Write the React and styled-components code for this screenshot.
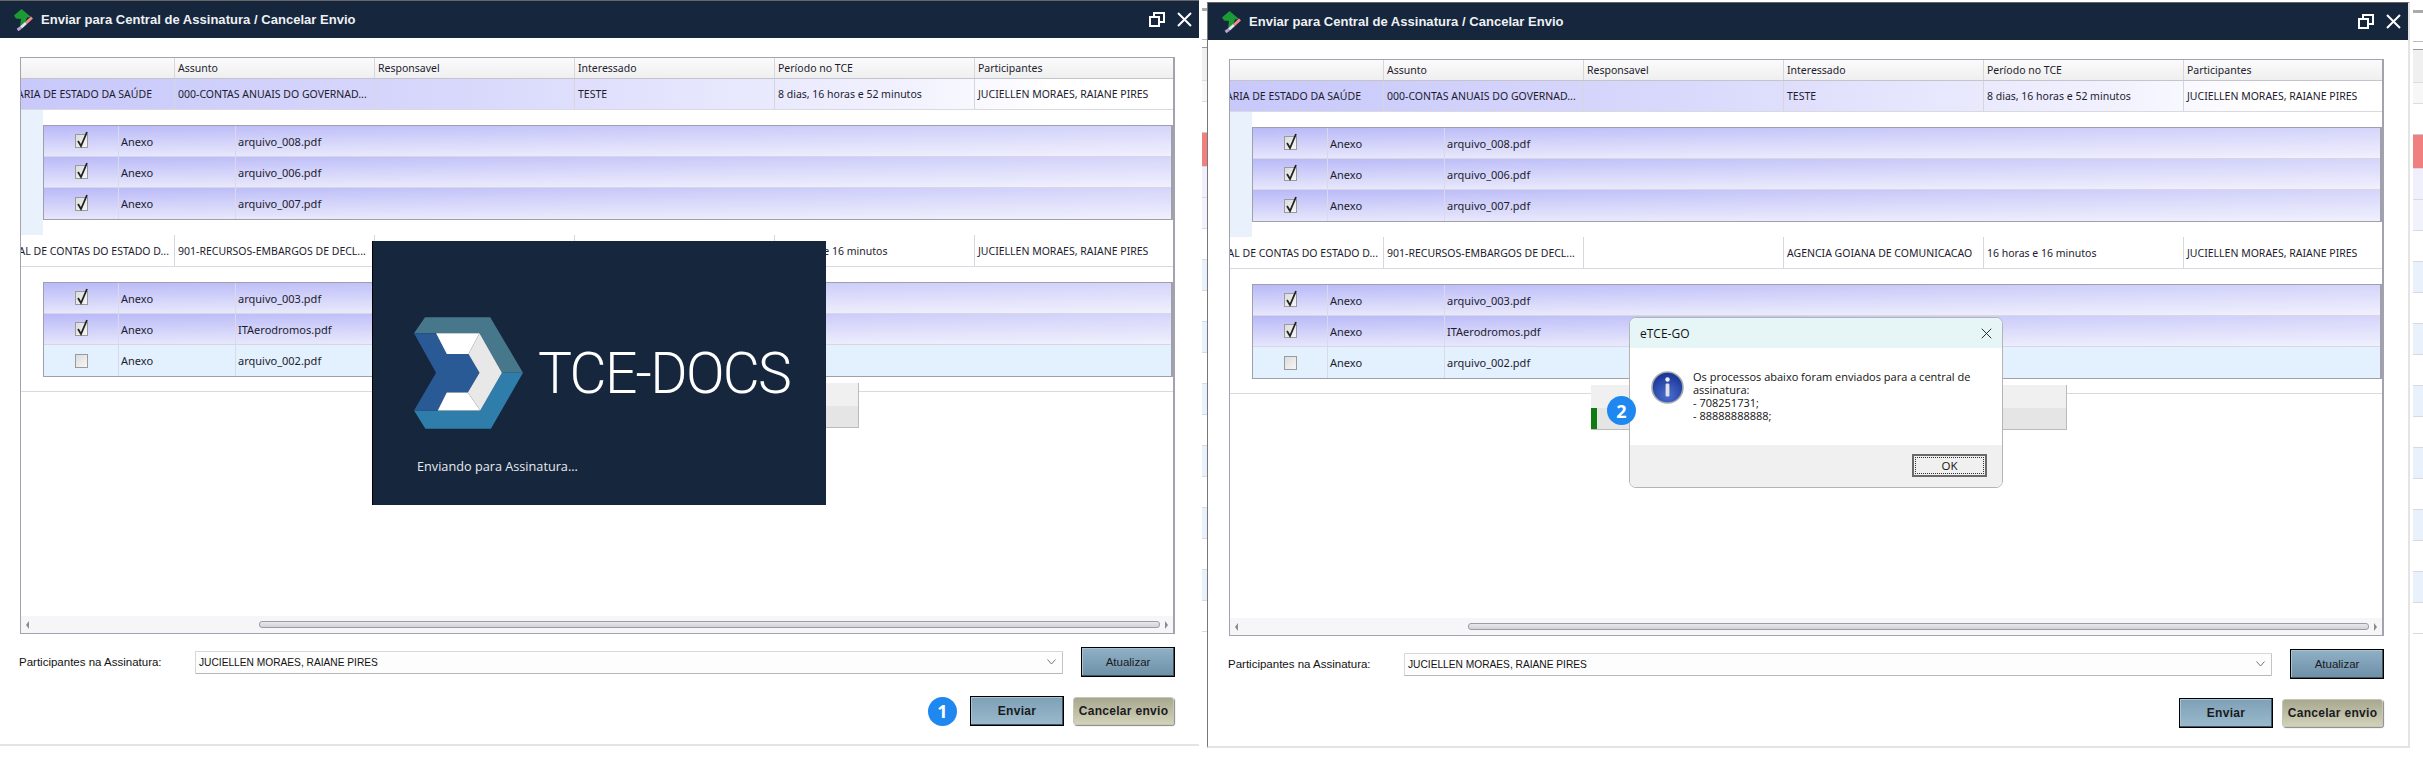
import React from "react";
import styled, { createGlobalStyle } from "styled-components";

const GlobalStyle = createGlobalStyle`
  html, body { margin: 0; padding: 0; background: #fff; }
  * { box-sizing: border-box; }
  body { font-family: "Noto Sans", "Liberation Sans", sans-serif; color: #1c1c2e; }
`;

const Page = styled.div`
  display: flex;
  align-items: flex-start;
  width: 2423px;
  height: 759px;
  overflow: hidden;
  background: #fff;
`;

// janela do app que fica por tras, aparece so nas beiradas
const BackStrip = styled.div`
  flex: none;
  width: ${(p) => p.$width}px;
  margin-top: ${(p) => p.$top}px;
  padding-left: 3px;
  display: flex;
  flex-direction: column;
`;

const BackRow = styled.div`
  height: ${(p) => p.$h}px;
  background: ${(p) => p.$bg};
  border-bottom: 1px solid ${(p) => p.$line || "#d9d9e2"};
`;

const Window = styled.div`
  flex: none;
  position: relative;
  width: ${(p) => p.$width}px;
  height: 746px;
  margin-top: ${(p) => p.$top}px;
  display: flex;
  flex-direction: column;
  border-top: 1px solid #666;
  border-bottom: 2px solid #e4e4e4;
  border-right: ${(p) => (p.$right ? "2px solid #e4e4e4" : "none")};
  border-left: ${(p) => (p.$right ? "1px solid #777" : "none")};
`;

const TitleBar = styled.div`
  flex: none;
  height: 37px;
  padding: 0 7px 0 14px;
  display: flex;
  align-items: center;
  background: #16263d;
`;

const TitleText = styled.span`
  margin-left: 7px;
  font-family: "Liberation Sans", sans-serif;
  font-size: 13px;
  font-weight: 700;
  letter-spacing: 0.03px;
  color: #eef1f4;
  flex: 1;
`;

const TitleButtons = styled.div`
  display: flex;
  align-items: center;
  gap: 12px;
`;

const Body = styled.div`
  flex: 1;
  display: flex;
  flex-direction: column;
  padding: 19px 24px 0 ${(p) => (p.$right ? 21 : 20)}px;
`;

const Grid = styled.div`
  flex: none;
  height: 577px;
  display: flex;
  flex-direction: column;
  border: 1px solid #a3a3af;
  border-right-width: 2px;
  overflow: hidden;
`;

const ScrollArea = styled.div`
  flex: 1;
  overflow: hidden;
`;

const Row = styled.div`
  display: grid;
  grid-template-columns: 154px repeat(5, 200px);
  height: ${(p) => p.$h}px;
  font-size: 10.5px;
`;

const HeaderRow = styled(Row)`
  background: linear-gradient(180deg, #fbfbfb, #efefef);
  border-bottom: 1px solid #c4c4cc;
`;

const DataRow = styled(Row)`
  border-bottom: 1px solid #d9d9e2;
  background: ${(p) =>
    p.$selected ? "linear-gradient(90deg, #c8c8fb 0%, #d9d9fc 40%, #f0f0fe 75%, #ffffff 90%)" : "#fff"};
`;

const Cell = styled.div`
  display: flex;
  align-items: center;
  justify-content: ${(p) => (p.$end ? "flex-end" : "flex-start")};
  padding: ${(p) => (p.$end ? `0 ${p.$end}px 0 0` : "0 0 0 3px")};
  border-right: 1px solid #d6d6de;
  white-space: nowrap;
  overflow: hidden;
  & > span { flex: none; }
`;

const DetailWrap = styled.div`
  padding: 15px 0 14px 22px;
  background: ${(p) => (p.$shaded ? "linear-gradient(90deg, #e8f1fc 22px, #fff 22px)" : "#fff")};
  border-bottom: 1px solid ${(p) => (p.$last ? "#d9d9e2" : "transparent")};
`;

const DetailTable = styled.div`
  border: 1px solid #a0a0ac;
  border-right-width: 2px;
  border-bottom-width: 1px;
`;

const DetailRow = styled.div`
  display: grid;
  grid-template-columns: 75px 117px 1fr;
  height: 31px;
  font-size: 11px;
  border-bottom: 1px solid #d6d6e6;
  background: ${(p) =>
    p.$checked
      ? "linear-gradient(90deg, rgba(255,255,255,0), rgba(255,255,255,.4)), linear-gradient(180deg, #b9b9f8, #e6e6fc)"
      : "#e3f0fe"};
  &:last-child { border-bottom: 0; }
`;

const DetailCell = styled.div`
  display: flex;
  align-items: center;
  justify-content: ${(p) => (p.$center ? "center" : "flex-start")};
  padding-left: ${(p) => (p.$center ? 0 : 2)}px;
  border-right: ${(p) => (p.$plain ? "none" : "1px solid #d9d9ee")};
`;

const CheckBox = styled.span`
  position: relative;
  display: block;
  width: 13px;
  height: 14px;
  border: 1px solid #9a9a9a;
  background: linear-gradient(135deg, #dcdcdc, #f6f6f6);
  & svg { position: absolute; left: 0; top: -4px; overflow: visible; }
`;

const Scrollbar = styled.div`
  flex: none;
  height: 17px;
  display: flex;
  align-items: center;
  padding: 0 5px;
  background: #f6f6f8;
`;

const ScrollThumb = styled.div`
  width: 901px;
  height: 7px;
  margin: 0 5px 0 auto;
  border: 1px solid #9c9ca6;
  border-radius: 3px;
  background: linear-gradient(180deg, #e8e8ec, #d2d2d8);
`;

const ScrollArrow = styled.span`
  width: 0;
  height: 0;
  border-top: 4px solid transparent;
  border-bottom: 4px solid transparent;
  ${(p) => (p.$left ? "border-right: 3px solid #8a8a8a;" : "border-left: 3px solid #8a8a8a;")}
`;

const ParticipantsRow = styled.div`
  flex: none;
  display: flex;
  align-items: center;
  margin-top: 13px;
  height: 30px;
  font-family: "Liberation Sans", sans-serif;
  font-size: 11.5px;
  color: #111;
`;

const FieldLabel = styled.label`
  width: 177px;
  margin-left: -1px;
`;

const Combo = styled.div`
  flex: none;
  width: 868px;
  height: 23px;
  padding: 0 6px 0 3px;
  display: flex;
  align-items: center;
  justify-content: space-between;
  font-size: 10.2px;
  background: #fdfdfd;
  border: 1px solid #d8d8d8;
  border-bottom: 1px solid #b8b8b8;
  border-right: 1px solid #c4c4c4;
  border-radius: 1px;
`;

const ActionRow = styled.div`
  flex: none;
  display: flex;
  align-items: center;
  justify-content: flex-end;
  margin-top: 19px;
  padding-right: 1px;
`;

const Button = styled.button`
  flex: none;
  width: ${(p) => p.$w}px;
  height: ${(p) => p.$hgt || 30}px;
  padding: 0;
  margin-left: ${(p) => p.$ml || 0}px;
  font-family: "Liberation Sans", sans-serif;
  font-size: ${(p) => (p.$bold ? 12 : 11.5)}px;
  font-weight: ${(p) => (p.$bold ? 700 : 400)};
  letter-spacing: ${(p) => (p.$bold ? ".3px" : 0)};
  color: #1a1a22;
  border-radius: ${(p) => (p.$khaki ? 3 : 0)}px;
  border: ${(p) => (p.$khaki ? "1px solid #c6c6b6" : "1px solid #000")};
  background: ${(p) =>
    p.$khaki
      ? "linear-gradient(180deg, #a8a890, #d2d2b8)"
      : p.$flip
        ? "linear-gradient(180deg, #8fb0c5, #6e90a7)"
        : "linear-gradient(180deg, #7ea0b6, #9ab9cc)"};
  box-shadow: ${(p) =>
    p.$khaki ? "1px 1px 1px #888" : "inset -1px -1px 0 #3e5566, inset 1px 1px 0 #a8c3d4"};
`;

const ProgressStrip = styled.div`
  position: absolute;
  left: ${(p) => p.$left}px;
  top: 382px;
  width: 476px;
  height: 45px;
  display: flex;
  flex-direction: column;
  border-right: 1px solid #bbb;
  border-bottom: 1px solid #bbb;
`;

const ProgressTop = styled.div`
  height: 23px;
  background: #f0f0f0;
`;

const ProgressBottom = styled.div`
  flex: 1;
  background: #e5e5e5;
`;

const ProgressFill = styled.div`
  width: 6px;
  height: 100%;
  background: #107c10;
`;

const Splash = styled.div`
  position: absolute;
  left: 372px;
  top: 240px;
  width: 454px;
  height: 264px;
  background: #16263d;
  border-left: 1px solid #000;
`;

const SplashBrand = styled.div`
  display: flex;
  align-items: center;
  padding: 76px 0 0 41px;
  gap: 15px;
`;

const SplashName = styled.span`
  font-family: Roboto, sans-serif;
  font-size: 57px;
  font-weight: 300;
  line-height: 1;
  color: #fff;
  letter-spacing: -1.7px;
`;

const SplashStatus = styled.p`
  margin: 28px 0 0 44px;
  font-family: "Open Sans", sans-serif;
  font-size: 12.7px;
  color: #e8ebee;
`;

const Badge = styled.span`
  flex: none;
  display: flex;
  align-items: center;
  justify-content: center;
  width: 29px;
  height: 29px;
  margin-right: ${(p) => p.$mr || 0}px;
  border-radius: 50%;
  background: #1e88f0;
  color: #fff;
  font-family: "Open Sans", sans-serif;
  font-size: 18px;
  font-weight: 700;
`;

const FloatingBadge = styled(Badge)`
  position: absolute;
  left: 399px;
  top: 393px;
  z-index: 3;
`;

const Dialog = styled.div`
  position: absolute;
  left: 421px;
  top: 314px;
  width: 374px;
  height: 171px;
  z-index: 2;
  display: flex;
  flex-direction: column;
  border: 1px solid #b4b4b4;
  border-radius: 7px;
  overflow: hidden;
  background: #fff;
  font-family: "Open Sans", sans-serif;
  color: #111;
`;

const DialogTitle = styled.div`
  flex: none;
  height: 30px;
  padding: 0 10px 0 10px;
  display: flex;
  align-items: center;
  justify-content: space-between;
  background: #e6f5f5;
  font-size: 12px;
`;

const DialogBody = styled.div`
  flex: 1;
  display: flex;
  gap: 9px;
  padding: 23px 10px 0 21px;
`;

const DialogText = styled.p`
  margin: -1px 0 0;
  font-size: 11px;
  line-height: 13px;
  white-space: pre-line;
`;

const DialogFooter = styled.div`
  flex: none;
  height: 42px;
  padding: 9px 15px 0 0;
  display: flex;
  justify-content: flex-end;
  background: #f0f0f0;
`;

const OkButton = styled.button`
  width: 75px;
  height: 23px;
  padding: 0;
  font-family: "Open Sans", sans-serif;
  font-size: 11.5px;
  color: #111;
  background: #f0f0f0;
  border: 2px solid #6a6a6a;
  outline: 1px dotted #333;
  outline-offset: -4px;
`;

const GREEN_ROWS = [
  { h: 10, bg: "#fff", line: "#fff" },
  { h: 3, bg: "#aaa", line: "#aaa" },
  { h: 29, bg: "#fff", line: "#bbb" },
  { h: 8, bg: "#fff", line: "#999" },
  { h: 33, bg: "#f0f0f0", line: "#ddd" },
  { h: 21, bg: "#f7f7f7", line: "#ddd" },
  { h: 31, bg: "#fff", line: "#ccc" },
  { h: 34, bg: "#f08080", line: "#ddd" },
  { h: 31, bg: "#f0f0fc" },
  { h: 31, bg: "#f2f2fc" },
  { h: 31, bg: "#fff" },
  { h: 31, bg: "#e8f1fc" },
  { h: 31, bg: "#fff" },
  { h: 31, bg: "#e8f1fc" },
  { h: 31, bg: "#fff" },
  { h: 31, bg: "#e8f1fc" },
  { h: 31, bg: "#fff" },
  { h: 31, bg: "#e8f1fc" },
  { h: 31, bg: "#fff" },
  { h: 31, bg: "#e8f1fc" },
  { h: 31, bg: "#fff" },
  { h: 31, bg: "#e8f1fc" },
  { h: 31, bg: "#fff" },
];

const HEADERS = ["", "Assunto", "Responsavel", "Interessado", "Período no TCE", "Participantes"];

const PROCESSES = [
  {
    orgao: "SECRETARIA DE ESTADO DA SAÚDE",
    end: 22,
    assunto: "000-CONTAS ANUAIS DO GOVERNAD...",
    interessado: "TESTE",
    periodo: "8 dias, 16 horas e 52 minutos",
    selected: true,
    files: [
      { name: "arquivo_008.pdf", checked: true },
      { name: "arquivo_006.pdf", checked: true },
      { name: "arquivo_007.pdf", checked: true },
    ],
  },
  {
    orgao: "TRIBUNAL DE CONTAS DO ESTADO D...",
    end: 5,
    assunto: "901-RECURSOS-EMBARGOS DE DECL...",
    interessado: "AGENCIA GOIANA DE COMUNICACAO",
    periodo: "16 horas e 16 minutos",
    selected: false,
    files: [
      { name: "arquivo_003.pdf", checked: true },
      { name: "ITAerodromos.pdf", checked: true },
      { name: "arquivo_002.pdf", checked: false },
    ],
  },
];

const AppIcon = () => (
  <svg width="20" height="22" viewBox="0 0 20 22">
    <polygon points="0,6.5 7.5,0 17,8 13,8.5 11,14 6,18 7,10 2,9.5" fill="#1c9a35" />
    <line x1="18" y1="8.5" x2="12" y2="14" stroke="#f28b8b" strokeWidth="3" />
    <line x1="12" y1="14" x2="7" y2="18.5" stroke="#e9e4ec" strokeWidth="3" />
    <line x1="7" y1="18.5" x2="3.5" y2="21" stroke="#b9a3d6" strokeWidth="3" />
  </svg>
);

const RestoreIcon = () => (
  <svg width="16" height="15" viewBox="0 0 16 15" fill="none" stroke="#fff" strokeWidth="2">
    <rect x="1" y="5" width="9" height="9" />
    <path d="M5 5V1h10v9h-5" />
  </svg>
);

const CloseIcon = ({ size = 15, color = "#fff", width = 2 }) => (
  <svg width={size} height={size} viewBox="0 0 15 15" stroke={color} strokeWidth={width}>
    <path d="M1 1l13 13M14 1L1 14" />
  </svg>
);

const TickIcon = () => (
  <svg width="13" height="16" viewBox="0 0 13 16" fill="none" stroke="#222" strokeWidth="1.8">
    <path d="M2 10l3 5L11 1" />
  </svg>
);

const ChevronIcon = () => (
  <svg width="9" height="6" viewBox="0 0 9 6" fill="none" stroke="#777">
    <path d="M.5 .5l4 4.5 4-4.5" />
  </svg>
);

const TceLogo = () => (
  <svg width="109" height="112" viewBox="162 262 326 334">
    <polygon points="162,310 195,262 390,262 488,428 425,428 358,310" fill="#47778a" />
    <polygon points="488,428 392,596 196,596 162,541 360,541 425,428" fill="#2f7dab" />
    <polygon points="162,310 228,310 260,372 325,372 358,428 323,487 260,487 233,541 162,541 228,428" fill="#2a5a96" />
    <polygon points="228,310 358,310 325,372 260,372" fill="#fff" />
    <polygon points="260,487 323,487 360,541 233,541" fill="#fff" />
    <polygon points="358,310 425,428 360,541 323,487 358,428 325,372" fill="#e8e8e8" />
  </svg>
);

const InfoIcon = () => (
  <svg width="33" height="33" viewBox="0 0 33 33" style={{ flex: "none" }}>
    <defs>
      <radialGradient id="infoBlue" cx="50%" cy="75%" r="70%">
        <stop offset="0" stopColor="#4a6fd0" />
        <stop offset="1" stopColor="#1a3596" />
      </radialGradient>
    </defs>
    <circle cx="16.5" cy="16.5" r="15.5" fill="url(#infoBlue)" stroke="#a8a8ae" strokeWidth="1.6" />
    <circle cx="16.5" cy="8.5" r="2.2" fill="#f2f2f2" />
    <rect x="14.6" y="12.5" width="3.8" height="13" rx="1.2" fill="#e2e2e6" />
  </svg>
);

const Back = ({ width, top }) => (
  <BackStrip $width={width} $top={top}>
    {GREEN_ROWS.map((r, i) => (
      <BackRow key={i} $h={r.h} $bg={r.bg} $line={r.line} />
    ))}
  </BackStrip>
);

const ProcessBlock = ({ proc, index, participantes }) => (
  <>
    <DataRow $h={proc.selected ? 31 : 32} $selected={proc.selected}>
      <Cell $end={proc.end}><span>{proc.orgao}</span></Cell>
      <Cell>{proc.assunto}</Cell>
      <Cell />
      <Cell>{proc.interessado}</Cell>
      <Cell>{proc.periodo}</Cell>
      <Cell>{participantes}</Cell>
    </DataRow>
    <DetailWrap $shaded={index === 0} $last={index === 1}>
      <DetailTable>
        {proc.files.map((f) => (
          <DetailRow key={f.name} $checked={f.checked}>
            <DetailCell $center>
              <CheckBox>{f.checked && <TickIcon />}</CheckBox>
            </DetailCell>
            <DetailCell>Anexo</DetailCell>
            <DetailCell $plain>{f.name}</DetailCell>
          </DetailRow>
        ))}
      </DetailTable>
    </DetailWrap>
  </>
);

const SendWindow = ({ width, top, right, children, badge }) => {
  const participantes = "JUCIELLEN MORAES, RAIANE PIRES";
  return (
    <Window $width={width} $top={top} $right={right}>
      <TitleBar>
        <AppIcon />
        <TitleText>Enviar para Central de Assinatura / Cancelar Envio</TitleText>
        <TitleButtons>
          <RestoreIcon />
          <CloseIcon />
        </TitleButtons>
      </TitleBar>
      <Body $right={right}>
        <Grid>
          <HeaderRow $h={21}>
            {HEADERS.map((h) => (
              <Cell key={h}>{h}</Cell>
            ))}
          </HeaderRow>
          <ScrollArea>
            {PROCESSES.map((p, i) => (
              <ProcessBlock key={p.orgao} proc={p} index={i} participantes={participantes} />
            ))}
          </ScrollArea>
          <Scrollbar>
            <ScrollArrow $left />
            <ScrollThumb />
            <ScrollArrow />
          </Scrollbar>
        </Grid>
        <ParticipantsRow>
          <FieldLabel>Participantes na Assinatura:</FieldLabel>
          <Combo>
            {participantes}
            <ChevronIcon />
          </Combo>
          <Button $w={94} $ml={18} $flip>Atualizar</Button>
        </ParticipantsRow>
        <ActionRow>
          {badge && <Badge $mr={13}>1</Badge>}
          <Button $w={94} $bold>Enviar</Button>
          <Button $w={101} $hgt={28} $ml={9} $bold $khaki>Cancelar envio</Button>
        </ActionRow>
      </Body>
      {children}
    </Window>
  );
};

export default function App() {
  return (
    <Page>
      <GlobalStyle />
      <SendWindow width={1199} top={0} badge>
        <ProgressStrip $left={383}>
          <ProgressTop />
          <ProgressBottom />
        </ProgressStrip>
        <Splash>
          <SplashBrand>
            <TceLogo />
            <SplashName>TCE-DOCS</SplashName>
          </SplashBrand>
          <SplashStatus>Enviando para Assinatura...</SplashStatus>
        </Splash>
      </SendWindow>
      <Back width={8} top={-2} />
      <SendWindow width={1203} top={2} right>
        <ProgressStrip $left={383}>
          <ProgressTop />
          <ProgressBottom><ProgressFill /></ProgressBottom>
        </ProgressStrip>
        <FloatingBadge>2</FloatingBadge>
        <Dialog>
          <DialogTitle>
            eTCE-GO
            <CloseIcon size={11} color="#222" width={1.3} />
          </DialogTitle>
          <DialogBody>
            <InfoIcon />
            <DialogText>
              {"Os processos abaixo foram enviados para a central de\nassinatura:\n- 708251731;\n- 88888888888;"}
            </DialogText>
          </DialogBody>
          <DialogFooter>
            <OkButton>OK</OkButton>
          </DialogFooter>
        </Dialog>
      </SendWindow>
      <Back width={13} top={0} />
    </Page>
  );
}
